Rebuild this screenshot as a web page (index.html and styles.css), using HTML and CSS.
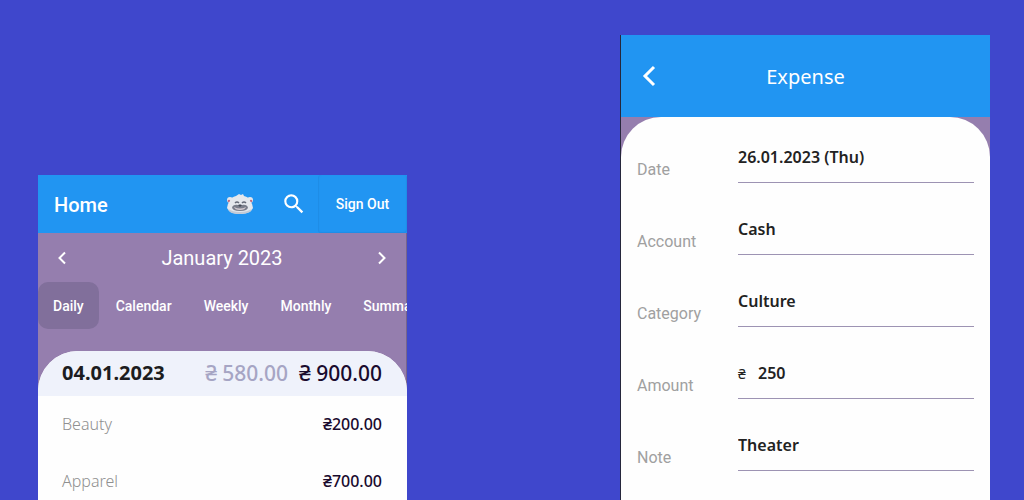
FILE: index.html
```html
<!DOCTYPE html>
<html lang="en">
<head>
<meta charset="utf-8">
<title>Budget</title>
<link rel="stylesheet" href="styles.css">
</head>
<body>
<main class="stage">
  <section class="phone phone-home" aria-label="Home">
    <header class="bar">
      <h1 class="bar-title">Home</h1>
      <button class="icon-button" aria-label="Profile">
        <svg width="28" height="22" viewBox="0 0 28 22">
          <circle cx="4" cy="7" r="3" fill="#e4e7ec"/><circle cx="24" cy="7" r="3" fill="#e4e7ec"/>
          <circle cx="3" cy="8" r="1.300" fill="#c46e80"/><circle cx="25" cy="8" r="1.300" fill="#c46e80"/>
          <path d="M4 8Q5 4 10 3L13 1L15 2L17 1L18 3Q23 4 24 8Q27 11 27 15L25 18Q21 21 14 21Q7 21 3 18L1 15Q1 11 4 8Z" fill="#e5e8ed"/>
          <path d="M2 16Q7 19 14 19Q21 19 26 16L24 19Q20 21 14 21Q7 21 4 19Z" fill="#c3cad5"/>
          <path d="M9 10Q11 8 13 10M16 10Q18 8 20 10" stroke="#666b78" stroke-width="1.500" fill="none"/>
          <path d="M6 14Q8 11 12 12L14 11L16 12Q20 11 22 14Q22 18 14 18Q6 18 6 14Z" fill="#7a7e8b"/>
          <path d="M8 14Q14 17 20 14Q19 17 14 17Q9 17 8 14Z" fill="#d8ced4"/>
          <path d="M12 12H16L14 14Z" fill="#454a56"/>
        </svg>
      </button>
      <button class="icon-button icon-search" aria-label="Search">
        <svg width="26" height="26" viewBox="0 0 24 24" fill="#fff"><path d="M15.500 14h-.79l-.28-.27A6.471 6.471 0 0 0 16 9.500 6.500 6.500 0 1 0 9.500 16c1.610 0 3.090-.59 4.230-1.570l.27.28v.79l5 4.990L20.490 19l-4.990-5zm-6 0C7.010 14 5 11.990 5 9.500S7.010 5 9.500 5 14 7.010 14 9.500 11.990 14 9.500 14z"/></svg>
      </button>
      <button class="sign-out">Sign Out</button>
    </header>
    <div class="month">
      <button class="icon-button" aria-label="Previous month"><svg width="10" height="14" viewBox="0 0 10 14"><path d="M8 1.500L2.500 7L8 12.500" class="chevron"/></svg></button>
      <h2 class="month-title">January 2023</h2>
      <button class="icon-button" aria-label="Next month"><svg width="10" height="14" viewBox="0 0 10 14"><path d="M2 1.500L7.500 7L2 12.500" class="chevron"/></svg></button>
    </div>
    <nav class="tabs">
      <button class="tab tab-active">Daily</button>
      <button class="tab">Calendar</button>
      <button class="tab">Weekly</button>
      <button class="tab">Monthly</button>
      <button class="tab">Summary</button>
    </nav>
    <div class="sheet">
      <div class="day">
        <h3 class="day-date">04.01.2023</h3>
        <span class="day-income">₴ 580.00</span>
        <span class="day-spent">₴ 900.00</span>
      </div>
      <div class="entry"><span class="entry-name">Beauty</span><span class="entry-sum">₴200.00</span></div>
      <div class="entry"><span class="entry-name">Apparel</span><span class="entry-sum">₴700.00</span></div>
    </div>
  </section>

  <section class="phone phone-expense" aria-label="Expense">
    <header class="expense-bar">
      <button class="icon-button back" aria-label="Back"><svg width="14" height="22" viewBox="0 0 14 22"><path d="M12 2L3 11L12 20" class="chevron chevron-large"/></svg></button>
      <h1 class="expense-title">Expense</h1>
    </header>
    <form class="sheet form">
      <div class="row"><label class="label" for="date">Date</label><div class="field"><input class="input" id="date" value="26.01.2023 (Thu)"></div></div>
      <div class="row"><label class="label" for="account">Account</label><div class="field"><input class="input" id="account" value="Cash"></div></div>
      <div class="row"><label class="label" for="category">Category</label><div class="field"><input class="input" id="category" value="Culture"></div></div>
      <div class="row"><label class="label" for="amount">Amount</label><div class="field"><span class="currency">₴</span><input class="input" id="amount" value="250"></div></div>
      <div class="row"><label class="label" for="note">Note</label><div class="field"><input class="input" id="note" value="Theater"></div></div>
    </form>
  </section>
</main>
</body>
</html>
```
FILE: styles.css
```css
* { box-sizing: border-box; }
body { margin: 0; background: #3f47cc; font-family: Roboto, sans-serif; }
h1, h2, h3 { margin: 0; font-weight: 400; }
button { border: 0; padding: 0; background: none; color: inherit; font: inherit; }
svg { display: block; }

.stage {
  display: grid;
  grid-template-columns: 1fr 1fr;
  column-gap: 214px;
  height: 100vh;
  padding: 35px 34px 0 38px;
  overflow: hidden;
}
.phone { display: flex; flex-direction: column; min-width: 0; background: #957eae; color: #fff; }
.phone-home { margin-top: 140px; box-shadow: inset -1px 0 #77658b; }
.phone-expense { box-shadow: -1px 0 #26273c; }

.bar { display: flex; align-items: stretch; height: 58px; background: #2195f2; }
.bar-title { flex: 1; padding-left: 16px; font-size: 20px; font-weight: 500; line-height: 60px; }
.icon-button { display: grid; place-items: center; }
.icon-search { padding: 0 11px 0 27px; }
.sign-out {
  width: 89px;
  border-radius: 3px;
  font-size: 14px;
  font-weight: 500;
  box-shadow: inset 1px 0 1px #1f8ce6, inset -1px -1px 1px #1f8ce6;
}

.month { display: flex; align-items: center; justify-content: space-between; height: 49px; padding: 0 20px 0 19px; }
.month-title { font-size: 20px; line-height: 24px; }
.chevron { fill: none; stroke: #fff; stroke-width: 2; }
.chevron-large { stroke-width: 3; }

.tabs { display: flex; gap: 2px; height: 47px; margin-bottom: 22px; overflow: hidden; }
.tab { flex: none; padding: 0 15px; border-radius: 10px; font-size: 14px; font-weight: 500; }
.tab-active { background: #816f9b; }

.sheet { flex: 1; overflow: hidden; border-radius: 40px 40px 0 0; background: #fefefe; font-family: "Noto Sans", sans-serif; }
.day { display: flex; align-items: center; height: 45px; padding: 0 25px 2px 24px; background: #eff2fb; font-size: 20px; font-weight: 500; color: #1a0b2e; }
.day-date { flex: 1; font-size: 20px; font-weight: 700; color: #1c1c20; }
.day-income { color: #a6a5c4; margin-right: 11px; }
.day-income, .day-spent { font-size: 21px; }
.entry { display: flex; align-items: center; justify-content: space-between; height: 57px; padding: 0 25px 2px 24px; font-size: 16px; }
.entry-name { color: #909090; font-weight: 300; }
.entry-sum { color: #1a0b2e; font-weight: 500; }

.expense-bar { display: grid; grid-template-columns: 56px 1fr 56px; align-items: center; height: 82px; background: #2195f2; }
.expense-title { text-align: center; font-family: "Noto Sans", sans-serif; font-size: 20px; }

.form { display: flex; flex-direction: column; gap: 21px; padding: 15px 16px 0; }
.row { display: grid; grid-template-columns: 101px minmax(0, 1fr); align-items: end; flex: none; }
.label { padding-bottom: 1px; color: #a0a0a0; font-family: Roboto, sans-serif; font-size: 16px; line-height: 24px; }
.field { display: flex; align-items: center; height: 51px; border-bottom: 1px solid #9d93b3; }
.currency { width: 20px; color: #222; font-size: 14px; }
.input { flex: 1; min-width: 0; padding: 0; border: 0; outline: 0; background: none; color: #222; font-family: "Noto Sans", sans-serif; font-size: 16px; font-weight: 600; }
```
